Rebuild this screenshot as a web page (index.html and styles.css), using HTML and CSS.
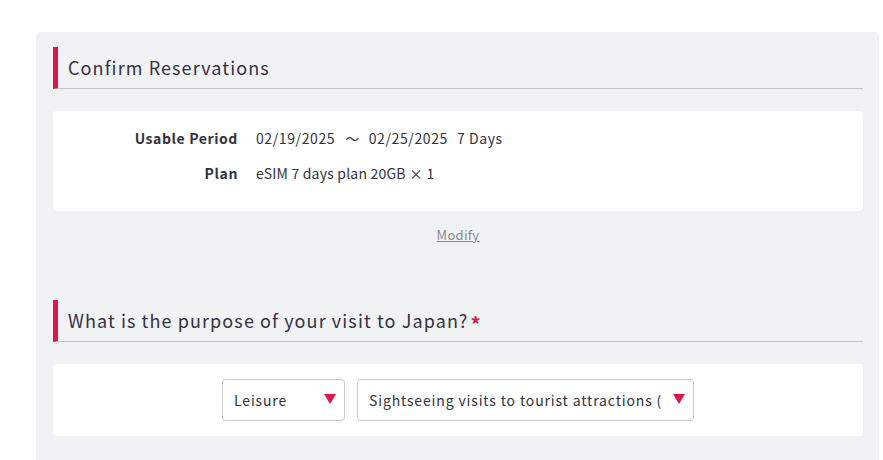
FILE: index.html
```html
<!DOCTYPE html>
<html lang="en">
<head>
<meta charset="utf-8">
<link rel="stylesheet" href="styles.css">
</head>
<body>
<div class="page">
  <div class="panel">
    <h2 class="heading">Confirm Reservations</h2>
    <div class="card info">
      <div class="row">
        <div class="label">Usable Period</div>
        <div class="value">02/19/2025<span class="tilde">〜</span>02/25/2025<span class="days">7 Days</span></div>
      </div>
      <div class="row">
        <div class="label">Plan</div>
        <div class="value plan">eSIM 7 days plan 20GB × 1</div>
      </div>
    </div>
    <div class="modify-wrap"><a class="modify" href="#">Modify</a></div>
    <h2 class="heading">What is the purpose of your visit to Japan?<span class="req">*</span></h2>
    <div class="card selects">
      <div class="select small"><span class="sel-text">Leisure</span><span class="arrow"></span></div>
      <div class="select large"><span class="sel-text">Sightseeing visits to tourist attractions (temples, shrines, etc.)</span><span class="arrow"></span></div>
    </div>
  </div>
</div>
</body>
</html>
```
FILE: styles.css
```css
html, body {
  margin: 0;
  padding: 0;
  background: #ffffff;
}
body {
  font-family: "Noto Sans CJK JP", "Noto Sans", sans-serif;
  color: #333340;
}
.page {
  padding: 32px 4px 0 36px;
}
.panel {
  background: #f1f2f4;
  border-radius: 5px 5px 0 0;
  padding: 15px 16px 30px 17px;
  height: 428px;
  box-sizing: border-box;
}
.heading {
  margin: 0;
  font-size: 18px;
  font-weight: normal;
  letter-spacing: 1.1px;
  line-height: 41px;
  height: 41px;
  border-left: 5px solid #e0164a;
  border-bottom: 1px solid #c4c4c6;
  padding-left: 10px;
  color: #333344;
}
.req {
  color: #e0164a;
  font-weight: bold;
  font-size: 20px;
  margin-left: 2px;
  vertical-align: -4px;
}
.card {
  background: #ffffff;
  border-radius: 4px;
}
.info {
  margin-top: 22px;
  padding: 9px 0 21px;
  height: 100px;
  box-sizing: border-box;
}
.row {
  display: flex;
  align-items: center;
  height: 35px;
  font-size: 14px;
  letter-spacing: 0.6px;
}
.label {
  width: 185px;
  text-align: right;
  font-weight: bold;
  flex: none;
}
.value {
  margin-left: 18px;
  white-space: nowrap;
}
.plan {
  letter-spacing: 0.2px;
}
.tilde {
  margin: 0 9px 0 10px;
}
.days {
  margin-left: 9px;
}
.modify-wrap {
  text-align: center;
  height: 89px;
  padding-top: 13px;
  box-sizing: border-box;
  line-height: 19px;
}
.modify {
  color: #8a8a8e;
  font-size: 13px;
  letter-spacing: 0.3px;
  text-decoration: underline;
}
.selects {
  margin-top: 22px;
  padding: 15px 0;
  display: flex;
  justify-content: center;
  gap: 12px;
}
.select {
  height: 42px;
  box-sizing: border-box;
  border: 1px solid #cccccc;
  border-radius: 4px;
  background: #fff;
  display: flex;
  align-items: center;
  padding: 0 8px 0 11px;
  font-size: 14px;
}
.small { width: 123px; }
.large { width: 337px; }
.sel-text {
  flex: 1;
  min-width: 0;
  overflow: hidden;
  white-space: nowrap;
  letter-spacing: 0.85px;
}
.arrow {
  flex: none;
  width: 0;
  height: 0;
  border-left: 6.5px solid transparent;
  border-right: 6.5px solid transparent;
  border-top: 10px solid #e0164a;
  margin-left: 12px;
  margin-top: -3px;
}
```
